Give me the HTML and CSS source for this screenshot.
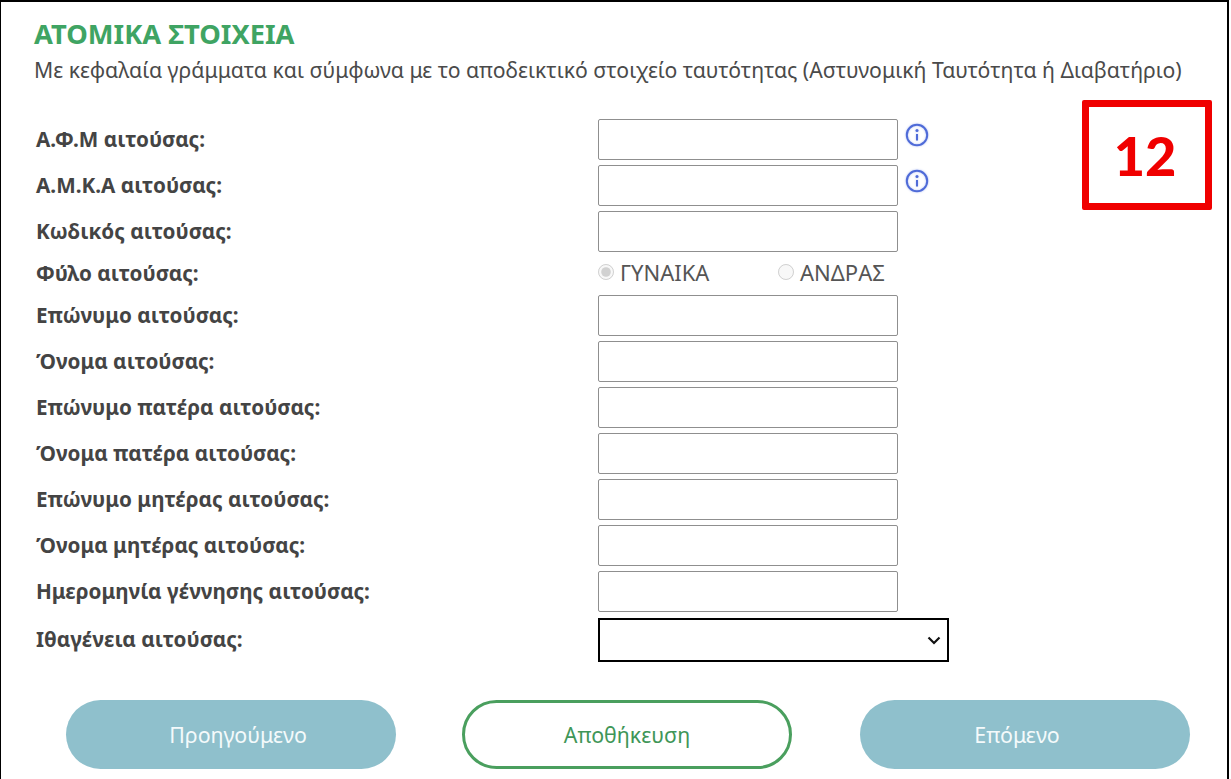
FILE: index.html
```html
<!doctype html>
<html lang="el">
<head>
    <meta charset="UTF-8">
    <title>Ατομικά στοιχεία</title>
    <link rel="stylesheet" href="styles.css">
</head>
<body>
<div class="page">
    <h1 class="page_title">ΑΤΟΜΙΚΑ ΣΤΟΙΧΕΙΑ</h1>
    <p class="page_note">Με κεφαλαία γράμματα και σύμφωνα με το αποδεικτικό στοιχείο ταυτότητας (Αστυνομική Ταυτότητα ή Διαβατήριο)</p>
    <div class="stamp">12</div>
    <form class="form">
        <div class="row">
            <label class="row_label">Α.Φ.Μ αιτούσας:</label>
            <input class="row_input">
            <svg class="row_info" width="24" height="24" viewBox="0 0 24 24">
                <circle cx="12" cy="12" r="10.2"/>
                <circle class="row_info_dot" cx="12" cy="7.6" r="1.5"/>
                <path d="M12 11v6.5"/>
            </svg>
        </div>
        <div class="row">
            <label class="row_label">Α.Μ.Κ.Α αιτούσας:</label>
            <input class="row_input">
            <svg class="row_info" width="24" height="24" viewBox="0 0 24 24">
                <circle cx="12" cy="12" r="10.2"/>
                <circle class="row_info_dot" cx="12" cy="7.6" r="1.5"/>
                <path d="M12 11v6.5"/>
            </svg>
        </div>
        <div class="row">
            <label class="row_label">Κωδικός αιτούσας:</label>
            <input class="row_input">
        </div>
        <div class="row row_radio">
            <label class="row_label">Φύλο αιτούσας:</label>
            <div class="radio_group">
                <label class="radio"><input type="radio" name="gender" checked disabled>ΓΥΝΑΙΚΑ</label>
                <label class="radio"><input type="radio" name="gender" disabled>ΑΝΔΡΑΣ</label>
            </div>
        </div>
        <div class="row">
            <label class="row_label">Επώνυμο αιτούσας:</label>
            <input class="row_input">
        </div>
        <div class="row">
            <label class="row_label">Όνομα αιτούσας:</label>
            <input class="row_input">
        </div>
        <div class="row">
            <label class="row_label">Επώνυμο πατέρα αιτούσας:</label>
            <input class="row_input">
        </div>
        <div class="row">
            <label class="row_label">Όνομα πατέρα αιτούσας:</label>
            <input class="row_input">
        </div>
        <div class="row">
            <label class="row_label">Επώνυμο μητέρας αιτούσας:</label>
            <input class="row_input">
        </div>
        <div class="row">
            <label class="row_label">Όνομα μητέρας αιτούσας:</label>
            <input class="row_input">
        </div>
        <div class="row">
            <label class="row_label">Ημερομηνία γέννησης αιτούσας:</label>
            <input class="row_input">
        </div>
        <div class="row row_select">
            <label class="row_label">Ιθαγένεια αιτούσας:</label>
            <div class="select">
                <svg width="14" height="9" viewBox="0 0 14 9"><path d="M1.5 1.5L7 7l5.5-5.5"/></svg>
            </div>
        </div>
        <div class="actions">
            <button type="button" class="btn btn_prev">Προηγούμενο</button>
            <button type="button" class="btn btn_save">Αποθήκευση</button>
            <button type="button" class="btn btn_next">Επόμενο</button>
        </div>
    </form>
</div>
</body>
</html>
```

FILE: styles.css
```css
* {
    box-sizing: border-box;
    padding: 0;
    margin: 0;
}

html,
body {
    height: 779px;
    overflow: hidden;
    background-color: #fff;
}

.page {
    position: relative;
    height: 779px;
    margin-right: 2px;
    padding: 18px 0 0 33px;
    border-top: 2px solid #000;
    border-left: 1px solid #000;
    border-right: 2px solid #000;
    font-family: "Noto Sans", sans-serif;
    color: #4a4a4a;
}

.page_title {
    font-size: 27.3px;
    line-height: 28px;
    font-weight: 700;
    color: #3fa463;
}

.page_note {
    margin-top: 8px;
    font-size: 21.2px;
    line-height: 28px;
    white-space: nowrap;
}

.stamp {
    position: absolute;
    left: 1081px;
    top: 98px;
    width: 130px;
    height: 110px;
    display: flex;
    justify-content: center;
    align-items: center;
    padding-right: 4px;
    border: 7px solid #f00000;
    border-radius: 2px;
    font-family: Lato, sans-serif;
    font-size: 54px;
    font-weight: 900;
    color: #f00000;
}

.form {
    margin-top: 35px;
}

.row {
    display: flex;
    align-items: center;
    height: 41px;
    margin-bottom: 5px;
}

.row_label {
    flex: none;
    width: 564px;
    padding-left: 2px;
    padding-bottom: 2px;
    font-size: 20.7px;
    font-weight: 700;
    color: #444;
}

.row_input {
    width: 300px;
    height: 41px;
    border: 1px solid #8f8f8f;
    border-radius: 2px;
    background-color: #fff;
    outline: none;
}

.row_info {
    align-self: flex-start;
    margin: 4px 0 0 7px;
    fill: none;
    stroke: #4f6bd8;
    stroke-width: 2;
    filter: drop-shadow(0 0 1px #b9c6f3);
}

.row_info_dot {
    fill: #4f6bd8;
    stroke: none;
}

.row_radio {
    height: 33px;
    margin-top: 5px;
    margin-bottom: 5px;
}

.radio_group {
    display: flex;
}

.radio {
    display: flex;
    align-items: center;
    width: 180px;
    padding-bottom: 3px;
    font-size: 22px;
    color: #555;
}

.radio input {
    width: 16px;
    height: 16px;
    margin-right: 6px;
}

.row_select {
    height: 44px;
    margin-top: 6px;
}

.select {
    display: flex;
    justify-content: flex-end;
    align-items: center;
    width: 351px;
    height: 44px;
    padding-right: 6px;
    border: 2px solid #000;
    background-color: #fff;
}

.select svg {
    fill: none;
    stroke: #111;
    stroke-width: 2.2;
}

.actions {
    display: flex;
    gap: 66px;
    margin-top: 38px;
    margin-left: 32px;
}

.btn {
    width: 330px;
    height: 69px;
    border: none;
    border-radius: 35px;
    background-color: #8fc0cc;
    font-family: "Noto Sans", sans-serif;
    font-size: 21.4px;
    color: #f4fafb;
}

.btn_prev {
    padding-left: 14px;
}

.btn_next {
    padding-right: 16px;
}

.btn_save {
    margin-right: 2px;
    background-color: #fff;
    border: 3px solid #4a9f5e;
    color: #3f9658;
}
```
